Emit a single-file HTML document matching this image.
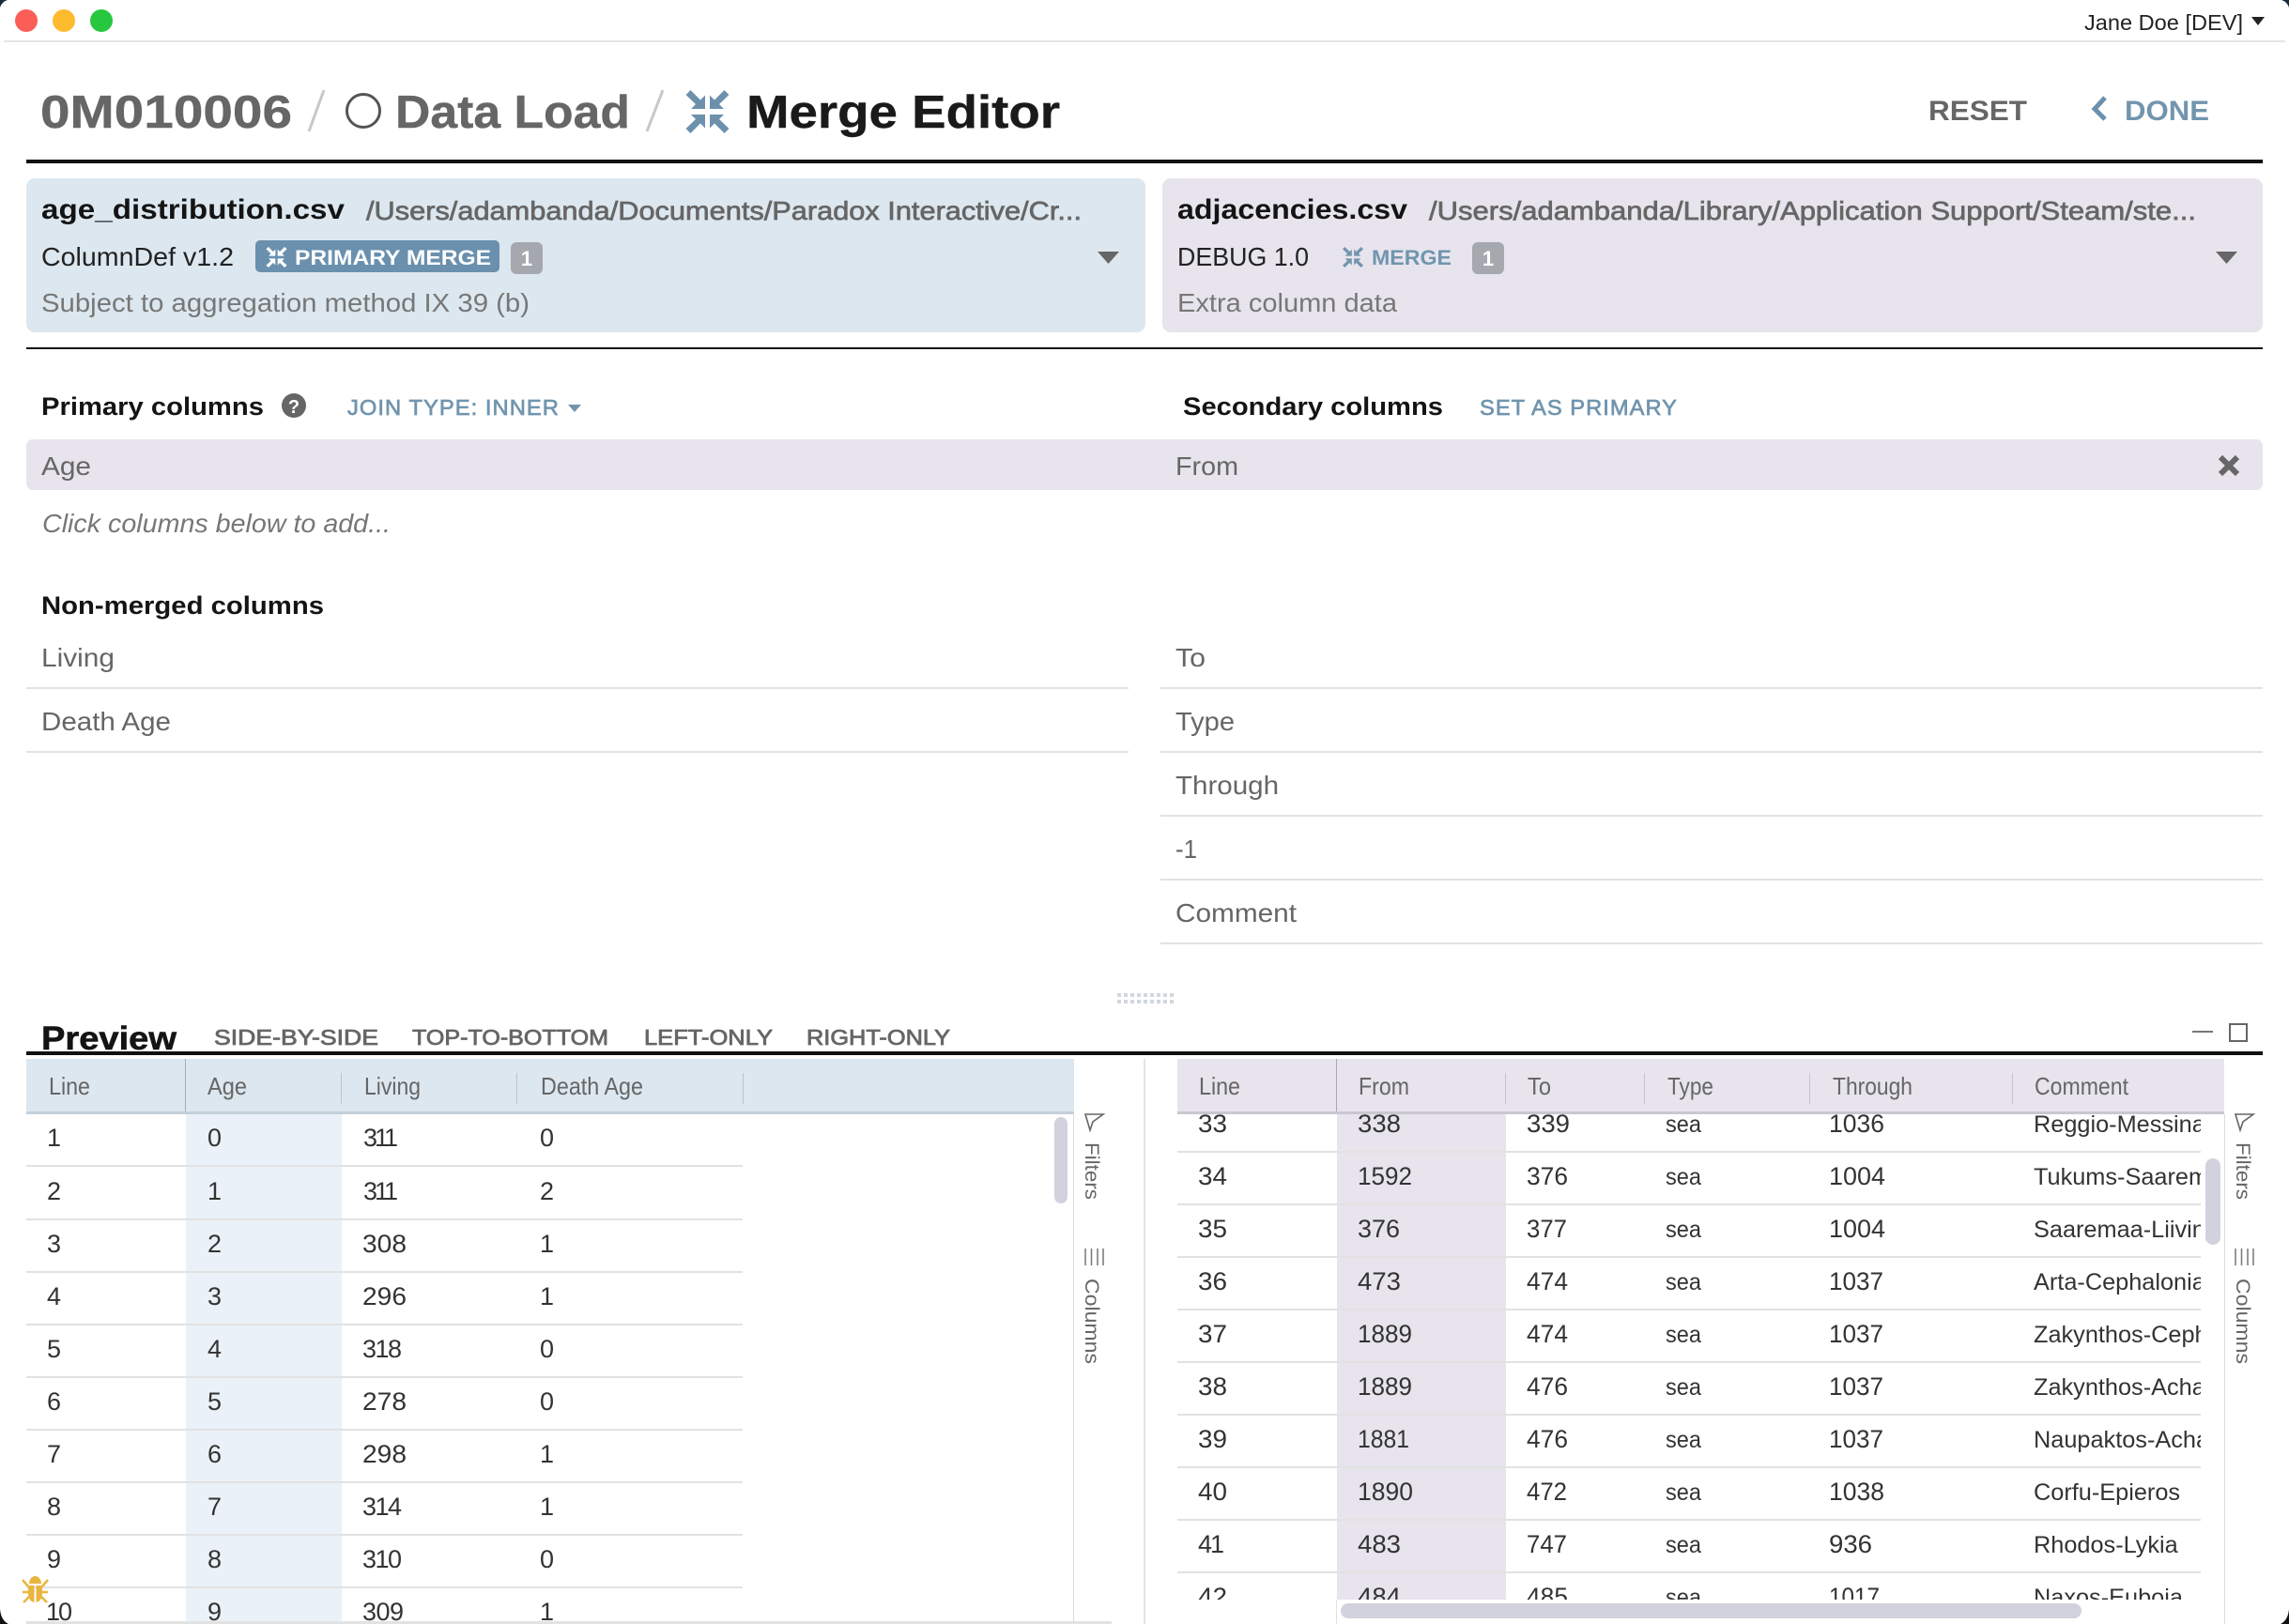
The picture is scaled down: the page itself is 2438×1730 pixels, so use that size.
<!DOCTYPE html>
<html lang="en"><head><meta charset="utf-8"><title>Merge Editor</title>
<style>
html,body{margin:0;padding:0;background:#fff;width:2438px;height:1730px;overflow:hidden}
svg{display:block}
text{font-family:"Liberation Sans",sans-serif;white-space:pre}
.b{font-weight:700}
.t{font-size:49px;font-weight:700}
.f{font-size:30px;font-weight:700;fill:#141414}
.p{font-size:28px;fill:#666;stroke:#666;stroke-width:.7}
.r{font-size:28px;fill:#666}
.d{font-size:28px;fill:#222}
.s{font-size:28px;fill:#777}
.h{font-size:27px;font-weight:700;fill:#141414}
.u{font-size:23px;fill:#7195ae;stroke:#7195ae;stroke-width:.7;letter-spacing:1px}
.g{font-size:23px;fill:#666;stroke:#666;stroke-width:.8}
.th{font-size:26px;fill:#666}
.n{font-size:27px;fill:#333}
.c{font-size:25.3px;fill:#333}
.v{font-size:21px;fill:#666}
</style></head><body>
<svg xmlns="http://www.w3.org/2000/svg" width="2438" height="1730" viewBox="0 0 2438 1730">
<defs>
<symbol id="m" viewBox="0 0 46 46">
<path d="M20.500 20H5.500L10.500 15 0 5 5 0 15.500 10.500 20.500 5.500Z"/>
<path d="M20.500 20H5.500L10.500 15 0 5 5 0 15.500 10.500 20.500 5.500Z" transform="matrix(-1 0 0 1 46 0)"/>
<path d="M20.500 20H5.500L10.500 15 0 5 5 0 15.500 10.500 20.500 5.500Z" transform="matrix(1 0 0 -1 0 46)"/>
<path d="M20.500 20H5.500L10.500 15 0 5 5 0 15.500 10.500 20.500 5.500Z" transform="matrix(-1 0 0 -1 46 46)"/>
</symbol>
<clipPath id="ct"><rect x="1254" y="1187" width="1090" height="517"/></clipPath>
<clipPath id="cl"><rect x="28" y="1187" width="1090" height="541"/></clipPath>
</defs>
<rect width="2438" height="1730" fill="#fff"/>

<!-- title bar -->
<rect x="4" y="43" width="2430" height="2" fill="#e6e6e6"/>
<ellipse cx="28" cy="22" rx="12" ry="12" fill="#fb5d57"/>
<ellipse cx="68" cy="22" rx="12" ry="12" fill="#fdbb2e"/>
<ellipse cx="108" cy="22" rx="12" ry="12" fill="#27c73f"/>
<text x="2220" y="32" font-size="23" fill="#222" textLength="169" lengthAdjust="spacingAndGlyphs">Jane Doe [DEV]</text>
<path d="M2398 18H2412L2405 27Z" fill="#222"/>

<!-- heading -->
<text class="t" x="43" y="136" fill="#666" stroke="#666" stroke-width=".4" textLength="268" lengthAdjust="spacingAndGlyphs">0M010006</text>
<path d="M345 96L329 140" stroke="#c8c8c8" stroke-width="3" fill="none"/>
<circle cx="387" cy="118" r="17.500" fill="none" stroke="#555" stroke-width="3"/>
<text class="t" x="421" y="136" fill="#666" stroke="#666" stroke-width=".4" textLength="250" lengthAdjust="spacingAndGlyphs">Data Load</text>
<path d="M706 96L689 140" stroke="#c8c8c8" stroke-width="3" fill="none"/>
<use href="#m" x="730" y="96" width="47" height="46" fill="#6d91ad"/>
<text class="t" x="795" y="136" fill="#1a1a1a" stroke="#1a1a1a" stroke-width=".4" textLength="334" lengthAdjust="spacingAndGlyphs">Merge Editor</text>
<text x="2054" y="128" font-size="30" font-weight="700" fill="#666" textLength="105" lengthAdjust="spacingAndGlyphs">RESET</text>
<path d="M2242 104L2231 116L2242 127" fill="none" stroke="#6d91ad" stroke-width="5"/>
<text x="2263" y="128" font-size="30" font-weight="700" fill="#7195ae" textLength="90" lengthAdjust="spacingAndGlyphs">DONE</text>
<rect x="28" y="170" width="2382" height="4" fill="#111"/>

<!-- file panels -->
<rect x="28" y="190" width="1192" height="164" rx="9" fill="#dce7ef"/>
<rect x="1238" y="190" width="1172" height="164" rx="9" fill="#e7e4ed"/>
<rect x="28" y="370" width="2382" height="2" fill="#111"/>

<text class="f" x="44" y="233" textLength="323" lengthAdjust="spacingAndGlyphs">age_distribution.csv</text>
<text class="p" x="390" y="234" textLength="762" lengthAdjust="spacingAndGlyphs">/Users/adambanda/Documents/Paradox Interactive/Cr...</text>
<text class="d" x="44" y="283" textLength="205" lengthAdjust="spacingAndGlyphs">ColumnDef v1.2</text>
<rect x="272" y="256" width="260" height="34" rx="5" fill="#6a90ae"/>
<use href="#m" x="283" y="263" width="23" height="22" fill="#fff"/>
<text x="314" y="282" font-size="22" font-weight="700" fill="#fff" textLength="209" lengthAdjust="spacingAndGlyphs">PRIMARY MERGE</text>
<rect x="544" y="258" width="34" height="34" rx="6" fill="#a5a8ae"/>
<text x="561" y="283" font-size="22" font-weight="700" fill="#fff" text-anchor="middle">1</text>
<path d="M1169 268H1192L1180.500 281Z" fill="#666"/>
<text class="s" x="44" y="332" textLength="520" lengthAdjust="spacingAndGlyphs">Subject to aggregation method IX 39 (b)</text>

<text class="f" x="1254" y="233" textLength="245" lengthAdjust="spacingAndGlyphs">adjacencies.csv</text>
<text class="p" x="1522" y="234" textLength="817" lengthAdjust="spacingAndGlyphs">/Users/adambanda/Library/Application Support/Steam/ste...</text>
<text class="d" x="1254" y="283" textLength="140" lengthAdjust="spacingAndGlyphs">DEBUG 1.0</text>
<use href="#m" x="1429" y="263" width="24" height="22" fill="#7195ae"/>
<text x="1461" y="282" font-size="22" font-weight="700" fill="#7195ae" textLength="85" lengthAdjust="spacingAndGlyphs">MERGE</text>
<rect x="1568" y="258" width="34" height="34" rx="6" fill="#a5a8ae"/>
<text x="1585" y="283" font-size="22" font-weight="700" fill="#fff" text-anchor="middle">1</text>
<path d="M2360 268H2383L2371.500 281Z" fill="#666"/>
<text class="s" x="1254" y="332" textLength="234" lengthAdjust="spacingAndGlyphs">Extra column data</text>

<!-- primary columns -->
<text class="h" x="44" y="442" textLength="237" lengthAdjust="spacingAndGlyphs">Primary columns</text>
<circle cx="313" cy="432" r="13" fill="#666"/>
<text x="313" y="440" font-size="20" font-weight="700" fill="#fff" text-anchor="middle">?</text>
<text class="u" x="370" y="442" textLength="226" lengthAdjust="spacingAndGlyphs">JOIN TYPE: INNER</text>
<path d="M605 431H619L612 439Z" fill="#7195ae"/>
<text class="h" x="1260" y="442" textLength="277" lengthAdjust="spacingAndGlyphs">Secondary columns</text>
<text class="u" x="1576" y="442" textLength="211" lengthAdjust="spacingAndGlyphs">SET AS PRIMARY</text>

<rect x="28" y="468" width="2382" height="54" rx="7" fill="#e7e4ed"/>
<text class="r" x="44" y="506" textLength="53" lengthAdjust="spacingAndGlyphs">Age</text>
<text class="r" x="1252" y="506" textLength="67" lengthAdjust="spacingAndGlyphs">From</text>
<path d="M2365 487L2383 505M2383 487L2365 505" stroke="#666" stroke-width="6" fill="none"/>
<text x="45" y="567" font-size="28" font-style="italic" fill="#777" textLength="371" lengthAdjust="spacingAndGlyphs">Click columns below to add...</text>

<!-- non merged -->
<text class="h" x="44" y="654" textLength="301" lengthAdjust="spacingAndGlyphs">Non-merged columns</text>
<text class="r" x="44" y="710" textLength="78" lengthAdjust="spacingAndGlyphs">Living</text>
<rect x="28" y="732" width="1174" height="2" fill="#e2e2e2"/>
<text class="r" x="44" y="778" textLength="138" lengthAdjust="spacingAndGlyphs">Death Age</text>
<rect x="28" y="800" width="1174" height="2" fill="#e2e2e2"/>

<text class="r" x="1252" y="710" textLength="32" lengthAdjust="spacingAndGlyphs">To</text>
<rect x="1236" y="732" width="1174" height="2" fill="#e2e2e2"/>
<text class="r" x="1252" y="778" textLength="63" lengthAdjust="spacingAndGlyphs">Type</text>
<rect x="1236" y="800" width="1174" height="2" fill="#e2e2e2"/>
<text class="r" x="1252" y="846" textLength="110" lengthAdjust="spacingAndGlyphs">Through</text>
<rect x="1236" y="868" width="1174" height="2" fill="#e2e2e2"/>
<text class="r" x="1252" y="914" textLength="23" lengthAdjust="spacingAndGlyphs">-1</text>
<rect x="1236" y="936" width="1174" height="2" fill="#e2e2e2"/>
<text class="r" x="1252" y="982" textLength="129" lengthAdjust="spacingAndGlyphs">Comment</text>
<rect x="1236" y="1004" width="1174" height="2" fill="#e2e2e2"/>

<!-- grip -->
<g fill="#cdd2db">
<rect x="1190" y="1058" width="60" height="4" opacity=".9"/><rect x="1190" y="1065" width="60" height="4" opacity=".9"/>
</g>
<g fill="#fff"><rect x="1194" y="1056" width="3" height="15"/><rect x="1201" y="1056" width="3" height="15"/><rect x="1208" y="1056" width="3" height="15"/><rect x="1215" y="1056" width="3" height="15"/><rect x="1222" y="1056" width="3" height="15"/><rect x="1229" y="1056" width="3" height="15"/><rect x="1236" y="1056" width="3" height="15"/><rect x="1243" y="1056" width="3" height="15"/></g>

<!-- preview -->
<text x="44" y="1118" font-size="35" font-weight="700" fill="#141414" stroke="#141414" stroke-width=".6" textLength="144" lengthAdjust="spacingAndGlyphs">Preview</text>
<text class="g" x="228" y="1113" textLength="175" lengthAdjust="spacingAndGlyphs">SIDE-BY-SIDE</text>
<text class="g" x="439" y="1113" textLength="209" lengthAdjust="spacingAndGlyphs">TOP-TO-BOTTOM</text>
<text class="g" x="686" y="1113" textLength="137" lengthAdjust="spacingAndGlyphs">LEFT-ONLY</text>
<text class="g" x="859" y="1113" textLength="153" lengthAdjust="spacingAndGlyphs">RIGHT-ONLY</text>
<rect x="2335" y="1098" width="22" height="2" fill="#777"/>
<rect x="2375" y="1091" width="18" height="18" fill="none" stroke="#666" stroke-width="2"/>
<rect x="28" y="1120" width="2382" height="4" fill="#111"/>

<!-- left grid -->
<rect x="28" y="1128" width="1116" height="56" fill="#dce7ef"/>
<rect x="28" y="1184" width="1116" height="3" fill="#c4d0da"/>
<rect x="198" y="1187" width="166" height="543" fill="#ebf1f8"/>
<g fill="#b9c6d1"><rect x="197" y="1128" width="1" height="56" fill="#9fb0bd"/><rect x="363" y="1143" width="1" height="33"/><rect x="550" y="1143" width="1" height="33"/><rect x="791" y="1143" width="1" height="33"/></g>
<text class="th" x="52" y="1166" textLength="44" lengthAdjust="spacingAndGlyphs">Line</text>
<text class="th" x="221" y="1166" textLength="42" lengthAdjust="spacingAndGlyphs">Age</text>
<text class="th" x="388" y="1166" textLength="60" lengthAdjust="spacingAndGlyphs">Living</text>
<text class="th" x="576" y="1166" textLength="109" lengthAdjust="spacingAndGlyphs">Death Age</text>
<g fill="#e2e2e2"><rect x="28" y="1241" width="763" height="2"/><rect x="28" y="1298" width="763" height="2"/><rect x="28" y="1354" width="763" height="2"/><rect x="28" y="1410" width="763" height="2"/><rect x="28" y="1466" width="763" height="2"/><rect x="28" y="1522" width="763" height="2"/><rect x="28" y="1578" width="763" height="2"/><rect x="28" y="1634" width="763" height="2"/><rect x="28" y="1690" width="763" height="2"/></g>
<g clip-path="url(#cl)">
<text class="n" x="50" y="1221">1</text><text class="n" x="221" y="1221">0</text><text class="n" x="387" y="1221" letter-spacing="-3">311</text><text class="n" x="575" y="1221">0</text>
<text class="n" x="50" y="1278">2</text><text class="n" x="221" y="1278">1</text><text class="n" x="387" y="1278" letter-spacing="-3">311</text><text class="n" x="575" y="1278">2</text>
<text class="n" x="50" y="1334">3</text><text class="n" x="221" y="1334">2</text><text class="n" x="386" y="1334" textLength="47" lengthAdjust="spacingAndGlyphs">308</text><text class="n" x="575" y="1334">1</text>
<text class="n" x="50" y="1390">4</text><text class="n" x="221" y="1390">3</text><text class="n" x="386" y="1390" textLength="47" lengthAdjust="spacingAndGlyphs">296</text><text class="n" x="575" y="1390">1</text>
<text class="n" x="50" y="1446">5</text><text class="n" x="221" y="1446">4</text><text class="n" x="386" y="1446" letter-spacing="-1.500">318</text><text class="n" x="575" y="1446">0</text>
<text class="n" x="50" y="1502">6</text><text class="n" x="221" y="1502">5</text><text class="n" x="386" y="1502" textLength="47" lengthAdjust="spacingAndGlyphs">278</text><text class="n" x="575" y="1502">0</text>
<text class="n" x="50" y="1558">7</text><text class="n" x="221" y="1558">6</text><text class="n" x="386" y="1558" textLength="47" lengthAdjust="spacingAndGlyphs">298</text><text class="n" x="575" y="1558">1</text>
<text class="n" x="50" y="1614">8</text><text class="n" x="221" y="1614">7</text><text class="n" x="386" y="1614" letter-spacing="-1.500">314</text><text class="n" x="575" y="1614">1</text>
<text class="n" x="50" y="1670">9</text><text class="n" x="221" y="1670">8</text><text class="n" x="386" y="1670" letter-spacing="-1.500">310</text><text class="n" x="575" y="1670">0</text>
<text class="n" x="49" y="1726" textLength="28" lengthAdjust="spacing">10</text><text class="n" x="221" y="1726">9</text><text class="n" x="386" y="1726" letter-spacing="-.5">309</text><text class="n" x="575" y="1726">1</text>
</g>
<rect x="28" y="1727" width="1156" height="3" fill="#e2e2e2"/>
<rect x="1123" y="1190" width="14" height="92" rx="7" fill="#d2d2de"/>
<rect x="1143" y="1187" width="1" height="543" fill="#dcdcdc"/>
<rect x="1218" y="1128" width="2" height="602" fill="#e4e4e4"/>

<path d="M1156 1187H1175L1164 1195L1161 1204Z" fill="none" stroke="#666" stroke-width="1.600"/>
<text class="v" transform="translate(1156 1217) rotate(90)" textLength="61" lengthAdjust="spacingAndGlyphs">Filters</text>
<path d="M1156 1330V1348M1162.500 1330V1348M1169 1330V1348M1175 1330V1348" stroke="#777" stroke-width="1.500" fill="none"/>
<text class="v" transform="translate(1156 1362) rotate(90)" textLength="91" lengthAdjust="spacingAndGlyphs">Columns</text>

<!-- right grid -->
<rect x="1254" y="1128" width="1115" height="56" fill="#e7e4ed"/>
<rect x="1254" y="1184" width="1115" height="3" fill="#c9c7d0"/>
<rect x="1424" y="1187" width="180" height="517" fill="#e7e4ed"/>
<g fill="#c4c2cc"><rect x="1423" y="1128" width="1" height="56" fill="#a9a7b1"/><rect x="1603" y="1143" width="1" height="33"/><rect x="1751" y="1143" width="1" height="33"/><rect x="1927" y="1143" width="1" height="33"/><rect x="2143" y="1143" width="1" height="33"/></g>
<text class="th" x="1277" y="1166" textLength="44" lengthAdjust="spacingAndGlyphs">Line</text>
<text class="th" x="1447" y="1166" textLength="54" lengthAdjust="spacingAndGlyphs">From</text>
<text class="th" x="1627" y="1166" textLength="25" lengthAdjust="spacingAndGlyphs">To</text>
<text class="th" x="1776" y="1166" textLength="49" lengthAdjust="spacingAndGlyphs">Type</text>
<text class="th" x="1952" y="1166" textLength="85" lengthAdjust="spacingAndGlyphs">Through</text>
<text class="th" x="2167" y="1166" textLength="100" lengthAdjust="spacingAndGlyphs">Comment</text>
<g fill="#e2e2e2"><rect x="1254" y="1226" width="1090" height="2"/><rect x="1254" y="1282" width="1090" height="2"/><rect x="1254" y="1338" width="1090" height="2"/><rect x="1254" y="1394" width="1090" height="2"/><rect x="1254" y="1450" width="1090" height="2"/><rect x="1254" y="1506" width="1090" height="2"/><rect x="1254" y="1562" width="1090" height="2"/><rect x="1254" y="1618" width="1090" height="2"/><rect x="1254" y="1674" width="1090" height="2"/></g>
<g clip-path="url(#ct)">
<text class="n" x="1276" y="1206" textLength="31" lengthAdjust="spacingAndGlyphs">33</text><text class="n" x="1446" y="1206" textLength="46" lengthAdjust="spacingAndGlyphs">338</text><text class="n" x="1626" y="1206" textLength="46" lengthAdjust="spacingAndGlyphs">339</text><text class="c" x="1774" y="1206" textLength="38" lengthAdjust="spacingAndGlyphs">sea</text><text class="n" x="1948" y="1206" textLength="59" lengthAdjust="spacingAndGlyphs">1036</text><text class="c" x="2166" y="1206">Reggio-Messina</text>
<text class="n" x="1276" y="1262" textLength="31" lengthAdjust="spacingAndGlyphs">34</text><text class="n" x="1446" y="1262" textLength="58" lengthAdjust="spacingAndGlyphs">1592</text><text class="n" x="1626" y="1262" textLength="44" lengthAdjust="spacingAndGlyphs">376</text><text class="c" x="1774" y="1262" textLength="38" lengthAdjust="spacingAndGlyphs">sea</text><text class="n" x="1948" y="1262" textLength="60" lengthAdjust="spacingAndGlyphs">1004</text><text class="c" x="2166" y="1262">Tukums-Saaremaa</text>
<text class="n" x="1276" y="1318" textLength="31" lengthAdjust="spacingAndGlyphs">35</text><text class="n" x="1446" y="1318" textLength="45" lengthAdjust="spacingAndGlyphs">376</text><text class="n" x="1626" y="1318" textLength="43" lengthAdjust="spacingAndGlyphs">377</text><text class="c" x="1774" y="1318" textLength="38" lengthAdjust="spacingAndGlyphs">sea</text><text class="n" x="1948" y="1318" textLength="60" lengthAdjust="spacingAndGlyphs">1004</text><text class="c" x="2166" y="1318">Saaremaa-Liivinmaa</text>
<text class="n" x="1276" y="1374" textLength="31" lengthAdjust="spacingAndGlyphs">36</text><text class="n" x="1446" y="1374" textLength="46" lengthAdjust="spacingAndGlyphs">473</text><text class="n" x="1626" y="1374" textLength="44" lengthAdjust="spacingAndGlyphs">474</text><text class="c" x="1774" y="1374" textLength="38" lengthAdjust="spacingAndGlyphs">sea</text><text class="n" x="1948" y="1374" textLength="58" lengthAdjust="spacingAndGlyphs">1037</text><text class="c" x="2166" y="1374">Arta-Cephalonia</text>
<text class="n" x="1276" y="1430" textLength="31" lengthAdjust="spacingAndGlyphs">37</text><text class="n" x="1446" y="1430" textLength="58" lengthAdjust="spacingAndGlyphs">1889</text><text class="n" x="1626" y="1430" textLength="44" lengthAdjust="spacingAndGlyphs">474</text><text class="c" x="1774" y="1430" textLength="38" lengthAdjust="spacingAndGlyphs">sea</text><text class="n" x="1948" y="1430" textLength="58" lengthAdjust="spacingAndGlyphs">1037</text><text class="c" x="2166" y="1430">Zakynthos-Cephalonia</text>
<text class="n" x="1276" y="1486" textLength="31" lengthAdjust="spacingAndGlyphs">38</text><text class="n" x="1446" y="1486" textLength="58" lengthAdjust="spacingAndGlyphs">1889</text><text class="n" x="1626" y="1486" textLength="44" lengthAdjust="spacingAndGlyphs">476</text><text class="c" x="1774" y="1486" textLength="38" lengthAdjust="spacingAndGlyphs">sea</text><text class="n" x="1948" y="1486" textLength="58" lengthAdjust="spacingAndGlyphs">1037</text><text class="c" x="2166" y="1486">Zakynthos-Achaia</text>
<text class="n" x="1276" y="1542" textLength="31" lengthAdjust="spacingAndGlyphs">39</text><text class="n" x="1446" y="1542" textLength="55" lengthAdjust="spacingAndGlyphs">1881</text><text class="n" x="1626" y="1542" textLength="44" lengthAdjust="spacingAndGlyphs">476</text><text class="c" x="1774" y="1542" textLength="38" lengthAdjust="spacingAndGlyphs">sea</text><text class="n" x="1948" y="1542" textLength="58" lengthAdjust="spacingAndGlyphs">1037</text><text class="c" x="2166" y="1542">Naupaktos-Achaia</text>
<text class="n" x="1276" y="1598" textLength="31" lengthAdjust="spacingAndGlyphs">40</text><text class="n" x="1446" y="1598" textLength="59" lengthAdjust="spacingAndGlyphs">1890</text><text class="n" x="1626" y="1598" textLength="43" lengthAdjust="spacingAndGlyphs">472</text><text class="c" x="1774" y="1598" textLength="38" lengthAdjust="spacingAndGlyphs">sea</text><text class="n" x="1948" y="1598" textLength="59" lengthAdjust="spacingAndGlyphs">1038</text><text class="c" x="2166" y="1598">Corfu-Epieros</text>
<text class="n" x="1276" y="1654" letter-spacing="-2">41</text><text class="n" x="1446" y="1654" textLength="46" lengthAdjust="spacingAndGlyphs">483</text><text class="n" x="1626" y="1654" textLength="43" lengthAdjust="spacingAndGlyphs">747</text><text class="c" x="1774" y="1654" textLength="38" lengthAdjust="spacingAndGlyphs">sea</text><text class="n" x="1948" y="1654" textLength="46" lengthAdjust="spacingAndGlyphs">936</text><text class="c" x="2166" y="1654">Rhodos-Lykia</text>
<text class="n" x="1276" y="1710" textLength="31" lengthAdjust="spacingAndGlyphs">42</text><text class="n" x="1446" y="1710" textLength="46" lengthAdjust="spacingAndGlyphs">484</text><text class="n" x="1626" y="1710" textLength="44" lengthAdjust="spacingAndGlyphs">485</text><text class="c" x="1774" y="1710" textLength="38" lengthAdjust="spacingAndGlyphs">sea</text><text class="n" x="1948" y="1710" textLength="54" lengthAdjust="spacingAndGlyphs">1017</text><text class="c" x="2166" y="1710">Naxos-Euboia</text>
</g>
<rect x="2349" y="1234" width="16" height="92" rx="8" fill="#d2d2de"/>
<rect x="1423" y="1704" width="1" height="26" fill="#e2e2e2"/>
<rect x="1428" y="1708" width="789" height="16" rx="8" fill="#d2d2de"/>
<rect x="2369" y="1187" width="1" height="543" fill="#dcdcdc"/>

<path d="M2381 1187H2400L2389 1195L2386 1204Z" fill="none" stroke="#666" stroke-width="1.600"/>
<text class="v" transform="translate(2382 1217) rotate(90)" textLength="61" lengthAdjust="spacingAndGlyphs">Filters</text>
<path d="M2381 1330V1348M2387.500 1330V1348M2394 1330V1348M2400 1330V1348" stroke="#777" stroke-width="1.500" fill="none"/>
<text class="v" transform="translate(2382 1362) rotate(90)" textLength="91" lengthAdjust="spacingAndGlyphs">Columns</text>

<!-- bug -->
<g fill="#e9b53f" stroke="none">
<path d="M31 1687a6.500 8 0 0 1 13 0Z"/>
<path d="M30 1689H36.500V1707C32 1706 30 1702 30 1697ZM38.500 1689H45V1697C45 1702 43 1706 38.500 1707Z"/>
<path d="M24 1683L30 1690M51 1683L45 1690M24 1696H31M51 1696H44M25 1707L31 1701M50 1707L44 1701" stroke="#e9b53f" stroke-width="2.500" fill="none"/>
</g>

<!-- window corners -->
<path d="M0 0H8Q2 2 0 8Z" fill="#1a2b3c"/>
<path d="M2438 0H2430Q2436 2 2438 8Z" fill="#1a2b3c"/>
<path d="M0 1730V1714Q1 1726 9 1730Z" fill="#111"/>
<path d="M2438 1730V1714Q2437 1726 2429 1730Z" fill="#111"/>
</svg>
</body></html>
